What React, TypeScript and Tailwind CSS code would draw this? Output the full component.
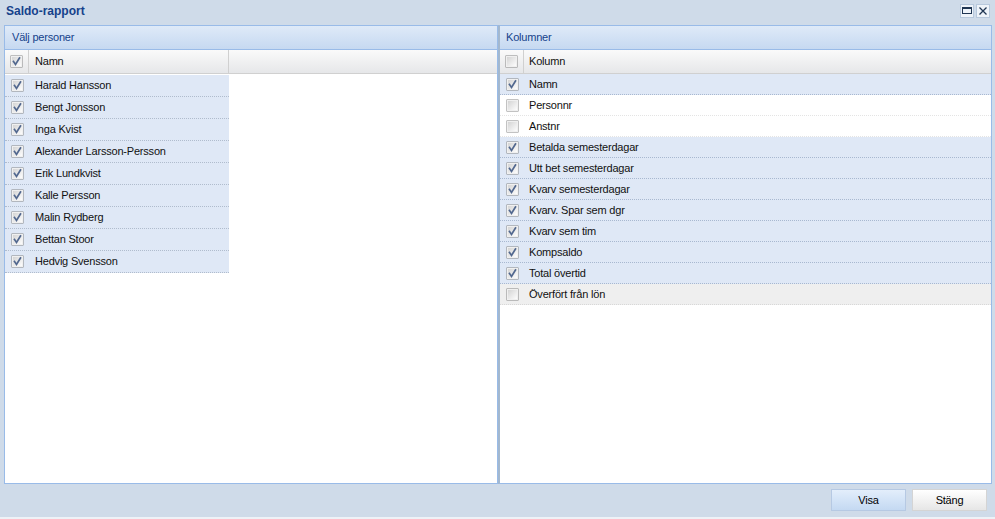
import React from "react";

const Check = ({ checked }: { checked: boolean }) => (
  <svg width="13" height="13" viewBox="0 0 13 13" className="block">
    <defs>
      <linearGradient id="cbg" x1="0" y1="0" x2="1" y2="1">
        <stop offset="0" stopColor="#d2d2d2" />
        <stop offset="1" stopColor="#ffffff" />
      </linearGradient>
    </defs>
    <rect x="0.5" y="0.5" width="12" height="12" fill="#868686" />
    <rect x="1.5" y="1.5" width="10" height="10" fill="url(#cbg)" stroke="#f0f0f0" strokeWidth="1" />
    {checked && (
      <path d="M3.5 6.5 L5.5 9.5 L9.5 3" fill="none" stroke="#52688f" strokeWidth="1.7" strokeLinecap="square" />
    )}
  </svg>
);

const persons = [
  "Harald Hansson",
  "Bengt Jonsson",
  "Inga Kvist",
  "Alexander Larsson-Persson",
  "Erik Lundkvist",
  "Kalle Persson",
  "Malin Rydberg",
  "Bettan Stoor",
  "Hedvig Svensson",
];

const cols: { name: string; checked: boolean; bg: string }[] = [
  { name: "Namn", checked: true, bg: "sel" },
  { name: "Personnr", checked: false, bg: "white" },
  { name: "Anstnr", checked: false, bg: "white" },
  { name: "Betalda semesterdagar", checked: true, bg: "sel" },
  { name: "Utt bet semesterdagar", checked: true, bg: "sel" },
  { name: "Kvarv semesterdagar", checked: true, bg: "sel" },
  { name: "Kvarv. Spar sem dgr", checked: true, bg: "sel" },
  { name: "Kvarv sem tim", checked: true, bg: "sel" },
  { name: "Kompsaldo", checked: true, bg: "sel" },
  { name: "Total övertid", checked: true, bg: "sel" },
  { name: "Överfört från lön", checked: false, bg: "gray" },
];

export default function App() {
  return (
    <div
      className="w-[995px] h-[519px] bg-[#cfdbe9] flex flex-col text-[11px] tracking-[-0.2px] text-[#111] overflow-hidden border-b-2 border-[#eef2f7]"
      style={{ fontFamily: '"Liberation Sans", Arial, sans-serif' }}
    >
      {/* title */}
      <div className="h-[25px] flex items-center justify-between pl-[6px] pr-[5px] shrink-0">
        <span className="font-bold text-[12px] tracking-normal text-[#15428b] mt-[-3px]">Saldo-rapport</span>
        <div className="flex gap-[2px] mt-[-4px]">
          <div className="w-[14px] h-[14px] bg-[#eef3f9] border border-[#b7c8dc] flex items-center justify-center">
            <div className="w-[10px] h-[7px] border border-[#1f3552] border-t-2" />
          </div>
          <div className="w-[14px] h-[14px] bg-[#eef3f9] border border-[#b7c8dc] flex items-center justify-center">
            <svg width="10" height="10" viewBox="0 0 10 10">
              <path d="M1.5 1.5 L8.5 8.5 M8.5 1.5 L1.5 8.5" stroke="#1f3552" strokeWidth="1.3" />
            </svg>
          </div>
        </div>
      </div>

      {/* body */}
      <div className="h-[459px] flex pl-[4px] pr-[3px] shrink-0">
        {/* left panel */}
        <div className="w-[494px] h-full border border-[#99bbe8] bg-white flex flex-col">
          <div className="h-[24px] shrink-0 flex items-center px-[7px] text-[#15428b] bg-gradient-to-b from-[#dfeaf8] to-[#c6d9f1] border-b border-[#99bbe8]">
            Välj personer
          </div>
          <div className="h-[24px] shrink-0 flex bg-gradient-to-b from-[#fafafa] to-[#e6e7e9] border-b border-[#d0d0d0]">
            <div className="w-[24px] flex items-center justify-center border-r border-[#d0d0d0]">
              <Check checked />
            </div>
            <div className="w-[200px] flex items-center pl-[6px] border-r border-[#d0d0d0]">Namn</div>
          </div>
          <div className="flex flex-col mt-[1px]">
            {persons.map((p) => (
              <div
                key={p}
                className="w-[224px] h-[22px] flex bg-[#dfe8f6] border-b border-dotted border-[#b0bccd]"
              >
                <div className="w-[24px] flex items-center justify-center">
                  <Check checked />
                </div>
                <div className="flex items-center pl-[6px]">{p}</div>
              </div>
            ))}
          </div>
        </div>

        {/* right panel */}
        <div className="w-[494px] h-full border border-[#99bbe8] border-l-2 border-l-[#a3b8cf] bg-white flex flex-col">
          <div className="h-[24px] shrink-0 flex items-center px-[6px] text-[#15428b] bg-gradient-to-b from-[#dfeaf8] to-[#c6d9f1] border-b border-[#99bbe8]">
            Kolumner
          </div>
          <div className="h-[24px] shrink-0 flex bg-gradient-to-b from-[#fafafa] to-[#e6e7e9] border-b border-[#d0d0d0]">
            <div className="w-[24px] flex items-center justify-center border-r border-[#d0d0d0]">
              <Check checked={false} />
            </div>
            <div className="flex-1 flex items-center pl-[5px]">Kolumn</div>
          </div>
          <div className="flex flex-col">
            {cols.map((c) => (
              <div
                key={c.name}
                className={
                  "h-[21px] flex border-b border-dotted " +
                  (c.bg === "sel"
                    ? "bg-[#dfe8f6] border-[#a8b8d0]"
                    : c.bg === "gray"
                    ? "bg-[#efefef] border-[#d8d8d8]"
                    : "bg-white border-[#e4e4e4]")
                }
              >
                <div className="w-[24px] flex items-center justify-center">
                  <Check checked={c.checked} />
                </div>
                <div className="flex items-center pl-[5px]">{c.name}</div>
              </div>
            ))}
          </div>
        </div>
      </div>

      {/* footer */}
      <div className="flex-1 flex justify-end items-start pt-[5px] pr-[8px] gap-[6px]">
        <button className="w-[75px] h-[22px] text-[11px] border border-[#b6c9e3] bg-gradient-to-b from-[#e3eefb] to-[#c4d9f2] text-black">
          Visa
        </button>
        <button className="w-[75px] h-[22px] text-[11px] border border-[#d4d4d4] bg-gradient-to-b from-[#ffffff] to-[#e6e6e6] text-black">
          Stäng
        </button>
      </div>
    </div>
  );
}
